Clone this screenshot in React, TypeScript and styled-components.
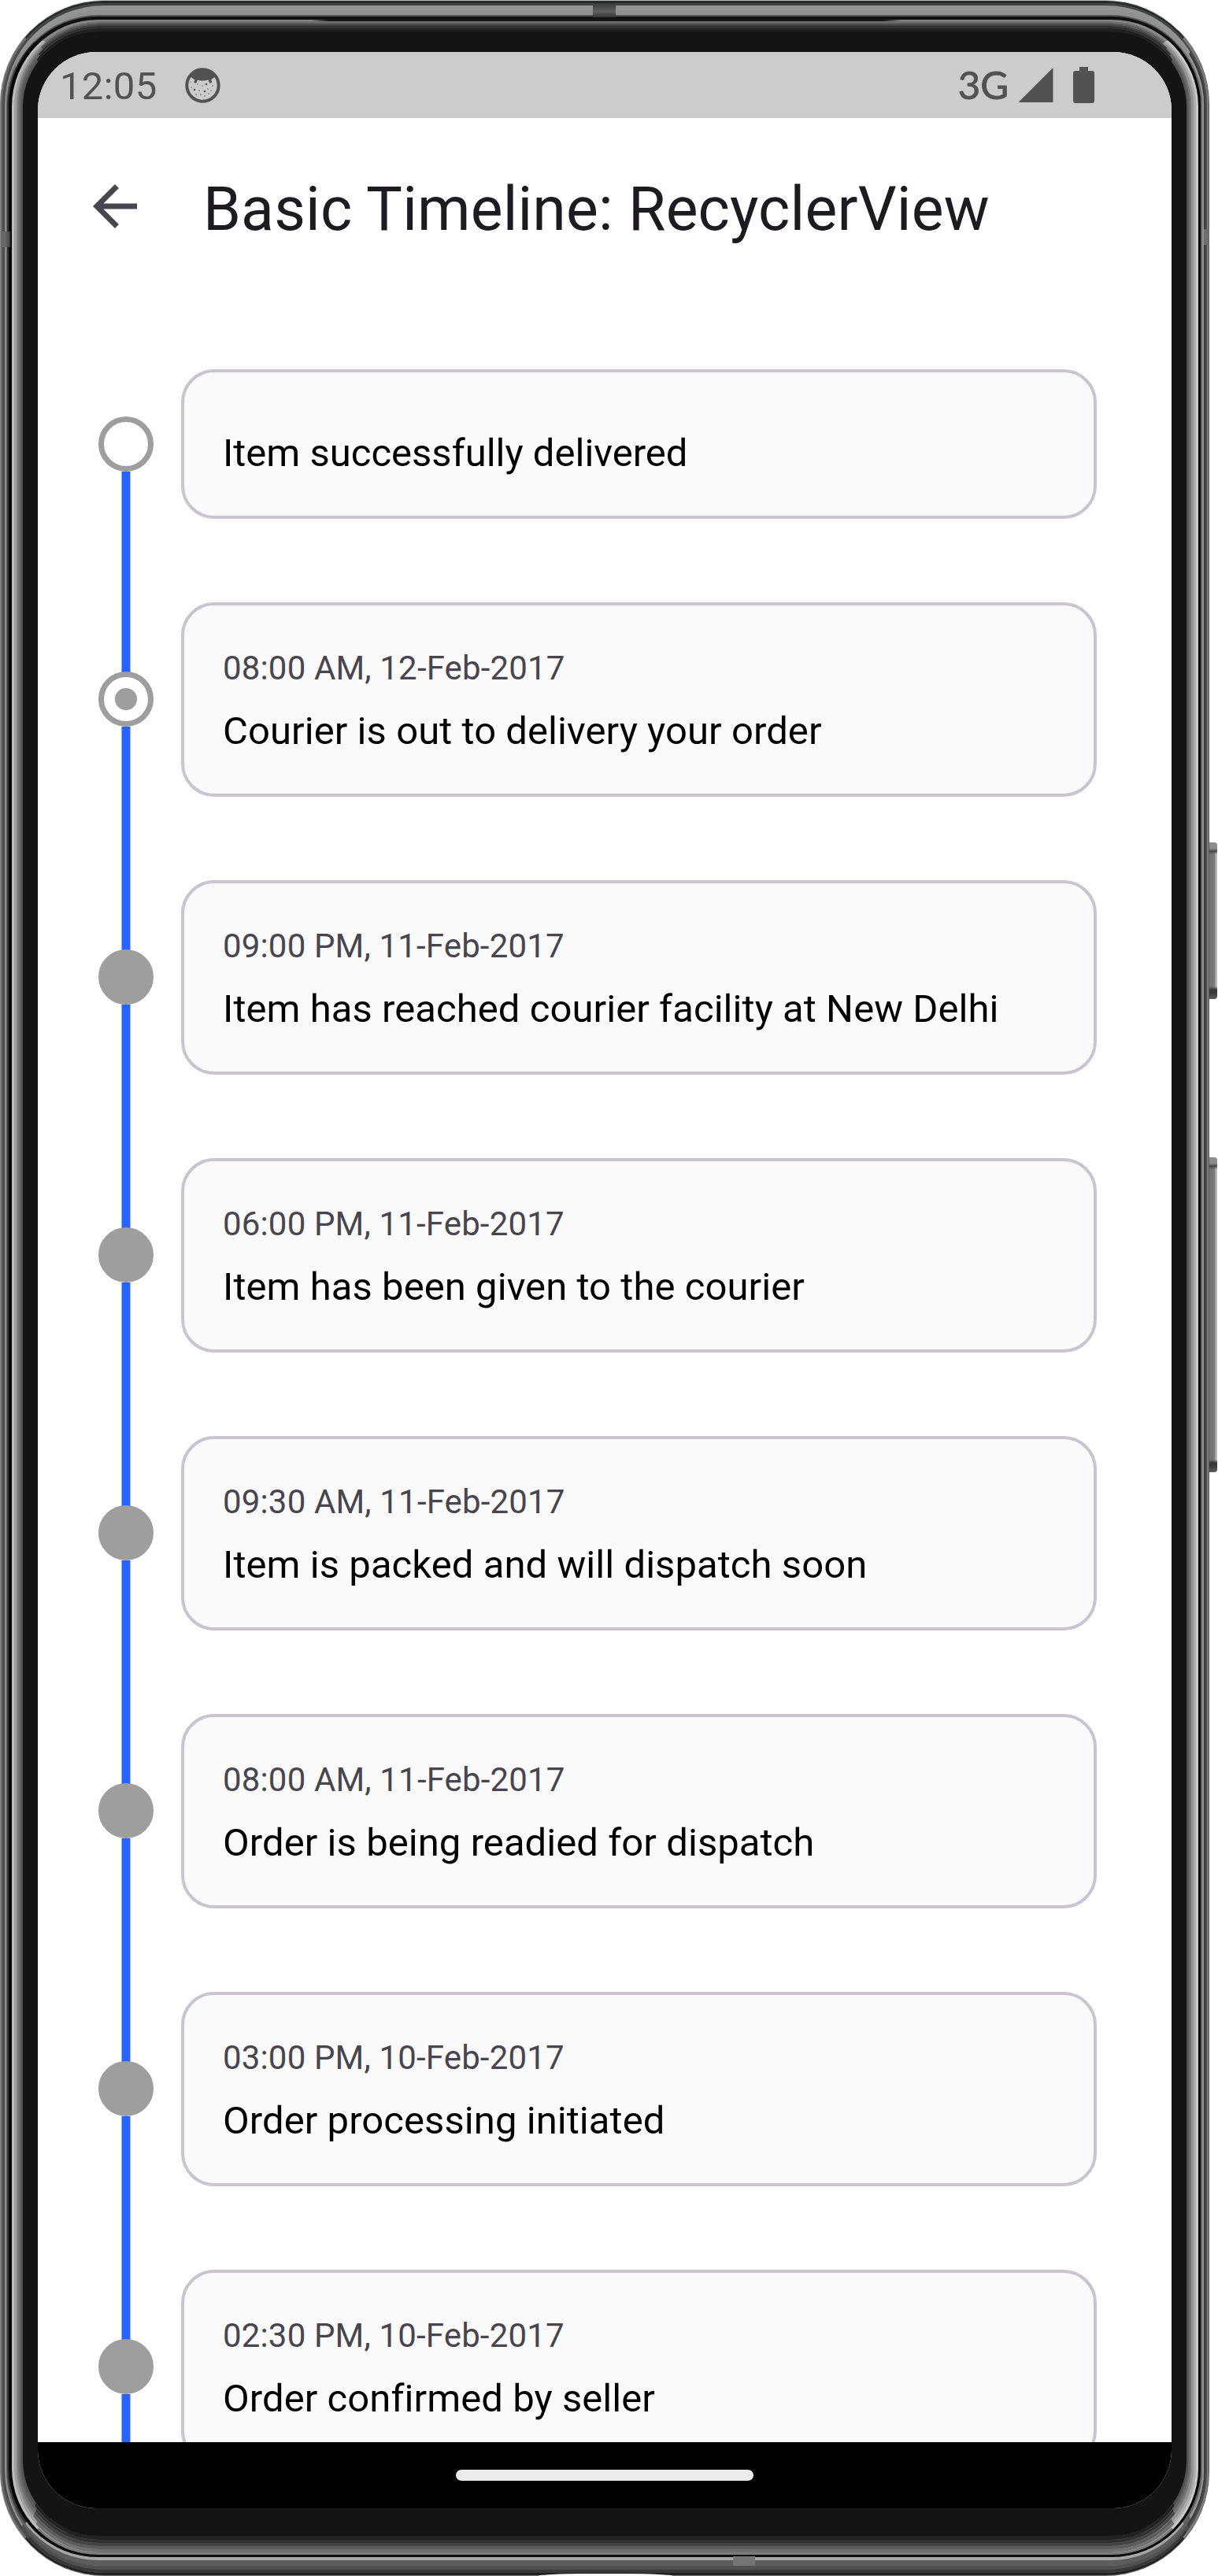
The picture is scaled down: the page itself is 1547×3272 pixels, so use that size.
import React from 'react';
import styled, { createGlobalStyle } from 'styled-components';

const Global = createGlobalStyle`
  body { margin: 0; background: #fff; font-family: Roboto, "Liberation Sans", sans-serif; }
  * { box-sizing: border-box; }
`;

type Sides = [number, number, number, number];
type Tones = [string, string, string, string];
interface Layer { w: Sides; c: Tones; r: number }

/* Concentric metal bands of the handset, from the rim to the glass: top, right, bottom, left. */
const bands: Layer[] = [
  { w: [1, 1, 1, 1], c: ['#b8bdb9', '#5c5c5c', '#777777', '#8a8a8a'], r: 132 },
  { w: [3, 2, 3, 2], c: ['#272a28', '#7c7c7c', '#202020', '#6a6a6a'], r: 131 },
  { w: [3, 2, 4, 3], c: ['#414342', '#4c4c4c', '#383838', '#4c4c4c'], r: 129 },
  { w: [6, 2, 5, 2], c: ['#949494', '#3c3c3c', '#505050', '#8c8c8c'], r: 126 },
  { w: [6, 2, 7, 1], c: ['#909090', '#949494', '#5c5c5c', '#6a6a6a'], r: 121 },
  { w: [2, 2, 4, 2], c: ['#555555', '#636363', '#a6a6a6', '#353535'], r: 116 },
  { w: [4, 3, 3, 4], c: ['#101010', '#080808', '#0d0d0d', '#080808'], r: 113 },
  { w: [2, 3, 3, 3], c: ['#848484', '#c8c8c8', '#7b7b7b', '#bcbcbc'], r: 110 },
  { w: [2, 3, 4, 3], c: ['#707070', '#acacac', '#707070', '#a0a0a0'], r: 108 },
  { w: [2, 3, 4, 2], c: ['#595959', '#929292', '#5b5b5b', '#848484'], r: 105 },
  { w: [2, 2, 4, 2], c: ['#434343', '#757575', '#444444', '#707070'], r: 103 },
  { w: [3, 2, 4, 2], c: ['#303030', '#626262', '#313131', '#606060'], r: 101 },
  { w: [4, 2, 5, 2], c: ['#202020', '#505050', '#222222', '#535353'], r: 99 },
];

const Stage = styled.div`
  display: flex;
  align-items: flex-start;
  width: 1547px;
  height: 3272px;
  overflow: hidden;
  background: #fff;
`;
const Band = styled.div<{ $l: Layer }>`
  flex: 1;
  display: flex;
  min-width: 0;
  min-height: 0;
  border-style: solid;
  border-width: ${p => p.$l.w.map(n => n + 'px').join(' ')};
  border-color: ${p => p.$l.c.join(' ')};
  border-radius: ${p => p.$l.r}px;
  background: ${p => p.$l.c[3]};
`;
const Handset = styled.div`
  position: relative;
  display: flex;
  width: 1536px;
  height: 3272px;
`;
const Glass = styled.div`
  flex: 1;
  min-width: 0;
  padding: 26px 19px 35px 19px;
  border-radius: 96px;
  background: #141414;
`;
const Keys = styled.div`
  width: 11px;
  padding-top: 1070px;
  display: flex;
  flex-direction: column;
  gap: 201px;
`;
const Key = styled.div<{ $h: number }>`
  width: 10px;
  height: ${p => p.$h}px;
  border-radius: 0 4px 4px 0;
  background:
    linear-gradient(180deg, #8c8c8c 0 8px, #444 11px, transparent 15px calc(100% - 16px), #3a3a3a calc(100% - 12px) calc(100% - 8px), #5c5c5c),
    linear-gradient(90deg, #777 0, #707070 4px, #858585 7px, #c8c8c8 9px, #aaa 10px);
`;
const Notch = styled.i<{ $x: number; $y: number; $w: number; $h: number; $c: string }>`
  position: absolute;
  left: ${p => p.$x}px;
  top: ${p => p.$y}px;
  width: ${p => p.$w}px;
  height: ${p => p.$h}px;
  background: ${p => p.$c};
`;
const PortLip = styled.i`
  position: absolute;
  left: 684px;
  bottom: 0;
  width: 170px;
  height: 3px;
  background: #fff;
  border-radius: 60px 60px 0 0 / 3px 3px 0 0;
`;

const Screen = styled.main`
  display: flex;
  flex-direction: column;
  width: 1440px;
  height: 3120px;
  overflow: hidden;
  border-radius: 74px;
  background: #fff;
`;
const StatusBar = styled.header`
  flex: none;
  display: flex;
  align-items: center;
  height: 84px;
  padding: 0 98px 0 28px;
  background: #ccc;
  color: #525252;
`;
const Clock = styled.span`
  font-size: 49px;
  line-height: 84px;
  padding-top: 4px;
  letter-spacing: 0.3px;
`;
const Network = styled.span`
  margin-left: auto;
  font-family: Lato, sans-serif;
  font-weight: 400;
  font-size: 49px;
  line-height: 82px;
  padding-bottom: 3px;
  -webkit-text-stroke: 0.9px #525252;
`;
const Face = styled.svg`margin-left: 35px;`;
const Signal = styled.svg`margin-left: 12px;`;
const Battery = styled.svg`margin-left: 25px;`;

const AppBar = styled.div`
  flex: none;
  display: flex;
  align-items: center;
  height: 224px;
  padding: 0 0 0 56px;
`;
const Title = styled.h1`
  margin: 8px 0 0 70px;
  font-size: 77px;
  font-weight: 400;
  line-height: 90px;
  letter-spacing: 0.14px;
  color: #1d1b20;
  white-space: nowrap;
`;
const Timeline = styled.ol`
  flex: 1;
  min-height: 0;
  overflow: hidden;
  margin: 0;
  padding: 42px 0 0;
  list-style: none;
`;
const Row = styled.li`
  display: flex;
  padding: 0 95px 0 77px;
`;
const Rail = styled.div`
  display: flex;
  flex-direction: column;
  align-items: center;
  width: 70px;
  margin-right: 35px;
`;
const Line = styled.div<{ $off?: boolean }>`
  flex: 1;
  width: 12px;
  background: ${p => (p.$off ? 'transparent' : 'linear-gradient(90deg, #94b0ff 1px, #2962ff 1px 11px, #94b0ff 11px)')};
`;
const Marker = styled.div<{ $state: State }>`
  flex: none;
  display: flex;
  align-items: center;
  justify-content: center;
  width: 70px;
  height: 70px;
  margin-top: ${p => (p.$state === 'open' ? 0 : -1)}px;
  border: 7px solid #9e9e9e;
  border-radius: 50%;
  background: ${p => (p.$state === 'done' ? '#9e9e9e' : '#fff')};
`;
const Dot = styled.div`
  width: 28px;
  height: 28px;
  border-radius: 50%;
  background: #9e9e9e;
`;
const Card = styled.article<{ $short?: boolean }>`
  flex: 1;
  height: ${p => (p.$short ? 190 : 247)}px;
  margin: 53px 0;
  padding: ${p => (p.$short ? 70 : 51)}px 49px 0;
  border: 4px solid #cac4d0;
  border-radius: 42px;
  background: #fafafa;
`;
const When = styled.div`
  font-size: 42px;
  line-height: 57px;
  letter-spacing: 0.16px;
  color: #49454f;
`;
const What = styled.div`
  font-size: 49px;
  line-height: 66px;
  letter-spacing: 0.06px;
  margin-top: 19px;
  color: #000;
  white-space: nowrap;
`;
const ShortWhat = styled(What)`margin-top: 0; letter-spacing: 0;`;
const NavBar = styled.footer`
  flex: none;
  display: flex;
  align-items: center;
  justify-content: center;
  height: 84px;
  background: #000;
`;
const Pill = styled.div`
  width: 378px;
  height: 14px;
  border-radius: 7px;
  background: #ebebeb;
`;

type State = 'open' | 'active' | 'done';
const events: { when?: string; what: string; state: State }[] = [
  { what: 'Item successfully delivered', state: 'open' },
  { when: '08:00 AM, 12-Feb-2017', what: 'Courier is out to delivery your order', state: 'active' },
  { when: '09:00 PM, 11-Feb-2017', what: 'Item has reached courier facility at New Delhi', state: 'done' },
  { when: '06:00 PM, 11-Feb-2017', what: 'Item has been given to the courier', state: 'done' },
  { when: '09:30 AM, 11-Feb-2017', what: 'Item is packed and will dispatch soon', state: 'done' },
  { when: '08:00 AM, 11-Feb-2017', what: 'Order is being readied for dispatch', state: 'done' },
  { when: '03:00 PM, 10-Feb-2017', what: 'Order processing initiated', state: 'done' },
  { when: '02:30 PM, 10-Feb-2017', what: 'Order confirmed by seller', state: 'done' },
];

const freckles = [[7, 18, .6], [12, 28, 1.3], [8, 25, .7], [16, 21, .7], [22, 23, .7], [27, 21, 1.3], [35, 23, .7], [29, 27, .7], [18, 29, .8], [25, 30, 1.3], [33, 29, .7], [20, 34, .8], [14, 34, .8], [30, 33, .7], [25, 36, .8]];

const Shell = ({ depth, children }: { depth: number; children: React.ReactNode }): React.ReactElement =>
  depth === bands.length ? <Glass>{children}</Glass> : <Band $l={bands[depth]}><Shell depth={depth + 1}>{children}</Shell></Band>;

export default function App() {
  return (
    <Stage>
      <Global />
      <Handset>
        <Shell depth={0}>
          <Screen>
            <StatusBar>
              <Clock>12:05</Clock>
              <Face width="45" height="45" viewBox="0 0 45 45">
                <circle cx="22.5" cy="22.5" r="20.2" fill="none" stroke="#525252" strokeWidth="4" />
                <path d="M6 11 Q22 -8 39 11 L36 13 L33 15.500 L34.500 18.500 L31.500 20 L29.500 15.500 Q22 17.500 16 15.500 L14 20 L11 18.500 L12.500 15.500 L9 13 Z" fill="#525252" />
                {freckles.map(([x, y, r]) => <circle key={`${x}-${y}`} cx={x} cy={y} r={r} fill="#525252" />)}
              </Face>
              <Network>3G</Network>
              <Signal width="45" height="45" viewBox="0 0 45 45"><path d="M0.500 44 L44.500 0 V44 Z" fill="#525252" /></Signal>
              <Battery width="27" height="46" viewBox="0 0 27 46">
                <path d="M8 0 H19 V5 H24 Q27 5 27 8 V43 Q27 46 24 46 H3 Q0 46 0 43 V8 Q0 5 3 5 H8 Z" fill="#525252" />
              </Battery>
            </StatusBar>
            <AppBar>
              <svg width="84" height="84" viewBox="0 0 24 24"><path d="M20 11H7.830l5.590-5.590L12 4l-8 8 8 8 1.410-1.410L7.830 13H20v-2z" fill="#49454f" /></svg>
              <Title>Basic Timeline: RecyclerView</Title>
            </AppBar>
            <Timeline>
              {events.map((e, i) => (
                <Row key={e.what}>
                  <Rail>
                    <Line $off={i === 0} />
                    <Marker $state={e.state}>{e.state === 'active' && <Dot />}</Marker>
                    <Line />
                  </Rail>
                  <Card $short={!e.when}>
                    {e.when ? <><When>{e.when}</When><What>{e.what}</What></> : <ShortWhat>{e.what}</ShortWhat>}
                  </Card>
                </Row>
              ))}
            </Timeline>
            <NavBar><Pill /></NavBar>
          </Screen>
        </Shell>
        <Notch $x={753} $y={4} $w={29} $h={18} $c="linear-gradient(#3a3a3a, #606060 60%, #333)" />
        <Notch $x={395} $y={24} $w={750} $h={3} $c="linear-gradient(90deg, transparent, #151515 3% 97%, transparent)" />
        <Notch $x={1} $y={294} $w={12} $h={20} $c="linear-gradient(90deg, #686868 50%, #3c3c3c)" />
        <Notch $x={1529} $y={291} $w={7} $h={20} $c="#6e6e6e" />
        <Notch $x={931} $y={3247} $w={28} $h={12} $c="#747474" />
        <PortLip />
      </Handset>
      <Keys><Key $h={199} /><Key $h={400} /></Keys>
    </Stage>
  );
}
